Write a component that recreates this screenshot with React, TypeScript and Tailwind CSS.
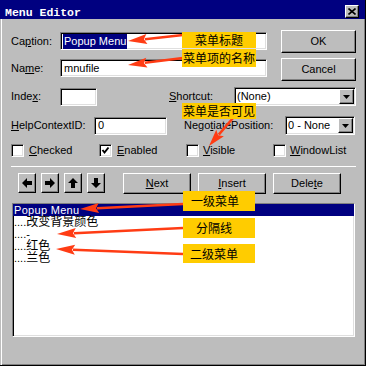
import React from "react";

const SUNKEN =
  "bg-white border border-t-[#808080] border-l-[#808080] border-r-white border-b-white shadow-[inset_1px_1px_0_#000,inset_-1px_-1px_0_#dfdfdf]";
const RAISED =
  "bg-[#bdbdbd] border border-t-white border-l-white border-r-black border-b-black shadow-[inset_-1px_-1px_0_#808080]";

function U({ children }: { children: React.ReactNode }) {
  return <span className="underline underline-offset-[1px] decoration-1">{children}</span>;
}

function DownTri() {
  return (
    <svg width="7" height="4" viewBox="0 0 7 4">
      <polygon points="0,0 7,0 3.5,4" fill="#000" />
    </svg>
  );
}

function Combo({ w, text }: { w: string; text: string }) {
  return (
    <div className={`${SUNKEN} ${w} h-[19px] flex items-center`}>
      <span className="flex-1 pl-[2px] leading-none">{text}</span>
      <div className={`${RAISED} w-[15px] h-[15px] mr-px flex items-center justify-center`}>
        <DownTri />
      </div>
    </div>
  );
}

function Check({ checked }: { checked?: boolean }) {
  return (
    <div className={`${SUNKEN} w-[13px] h-[13px] flex items-center justify-center`}>
      {checked && (
        <svg width="9" height="9" viewBox="0 0 9 9">
          <path d="M1.5 4 L3.5 6.5 L7.5 1.5" stroke="#000" strokeWidth="2" fill="none" />
        </svg>
      )}
    </div>
  );
}

function ArrowIcon({ dir }: { dir: "l" | "r" | "u" | "d" }) {
  const rot = { l: 0, r: 180, u: 90, d: 270 }[dir];
  return (
    <svg width="10" height="10" viewBox="0 0 10 10" style={{ transform: `rotate(${rot}deg)` }}>
      <polygon points="0,5 5,0 5,3 10,3 10,7 5,7 5,10" fill="#000" />
    </svg>
  );
}

function Arrow({ x1, y1, x2, y2, head = 19, hw = 5 }: { x1: number; y1: number; x2: number; y2: number; head?: number; hw?: number }) {
  const dx = x2 - x1;
  const dy = y2 - y1;
  const len = Math.hypot(dx, dy);
  const ux = dx / len;
  const uy = dy / len;
  const bx = x2 - ux * head;
  const by = y2 - uy * head;
  const px = -uy;
  const py = ux;
  const pts = `${x2},${y2} ${bx + px * hw},${by + py * hw} ${bx + ux * 3},${by + uy * 3} ${bx - px * hw},${by - py * hw}`;
  return (
    <g>
      <line x1={x1} y1={y1} x2={bx + ux * 2} y2={by + uy * 2} stroke="#ff3c14" strokeWidth="2.5" />
      <polygon points={pts} fill="#ff3c14" />
    </g>
  );
}

function Note({ cls, text }: { cls: string; text: string }) {
  return (
    <div
      className={`absolute bg-[#ffcc00] flex items-center text-[12px] text-black font-['Noto_Sans_CJK_SC',sans-serif] leading-none ${cls}`}
    >
      {text}
    </div>
  );
}

export default function App() {
  return (
    <div className="relative w-[366px] h-[366px] bg-[#bdbdbd] border-r border-b border-black overflow-hidden flex flex-col text-[11px] text-black font-['Liberation_Sans','Noto_Sans_CJK_SC',sans-serif] leading-none">
      {/* Title bar */}
      <div className="h-[19px] bg-[#000080] flex items-start justify-between shrink-0">
        <span className="ml-[5px] mt-[7px] text-white font-bold text-[11.5px] font-['Liberation_Mono',monospace]">
          Menu Editor
        </span>
        <div className={`${RAISED} mt-[5px] mr-[6px] w-[14px] h-[13px] flex items-center justify-center`}>
          <svg width="8" height="7" viewBox="0 0 8 7">
            <path d="M0.5 0.5 L7.5 6.5 M7.5 0.5 L0.5 6.5" stroke="#000" strokeWidth="1.6" />
          </svg>
        </div>
      </div>

      {/* Body */}
      <div className="flex-1 flex flex-col pl-[11px] shadow-[inset_1px_0_0_#bdbdbd,inset_2px_0_0_#fff,inset_-1px_-1px_0_#808080]">
        {/* top section */}
        <div className="flex pt-[11px]">
          <div className="flex flex-col pt-[2px]">
            <div className="flex items-center h-[18px]">
              <span className="w-[49px]">
                Ca<U>p</U>tion:
              </span>
              <div className={`${SUNKEN} w-[207px] h-[18px] flex items-center pl-[2px]`}>
                <span className="bg-[#000080] text-white px-px py-[2px]">Popup Menu</span>
              </div>
            </div>
            <div className="flex items-center h-[18px] mt-[9px]">
              <span className="w-[49px]">
                Na<U>m</U>e:
              </span>
              <div className={`${SUNKEN} w-[207px] h-[18px] flex items-center pl-[3px]`}>mnufile</div>
            </div>
          </div>
          <div className="flex flex-col ml-[14px]">
            <div className={`${RAISED} w-[75px] h-[23px] flex items-center justify-center`}>OK</div>
            <div className={`${RAISED} w-[75px] h-[23px] mt-[5px] flex items-center justify-center`}>Cancel</div>
          </div>
        </div>

        {/* Index / Shortcut */}
        <div className="flex items-center h-[19px] mt-[6px]">
          <span className="w-[49px]">
            Inde<U>x</U>:
          </span>
          <div className={`${SUNKEN} w-[37px] h-[18px]`} />
          <span className="ml-[72px] w-[65px]">
            <U>S</U>hortcut:
          </span>
          <Combo w="w-[122px]" text="(None)" />
        </div>

        {/* HelpContextID / NegotiatePosition */}
        <div className="flex items-center h-[19px] mt-[10px]">
          <span className="w-[83px]">
            <U>H</U>elpContextID:
          </span>
          <div className={`${SUNKEN} w-[73px] h-[18px] flex items-center pl-[3px]`}>0</div>
          <span className="ml-[17px] w-[101px]">
            Nego<U>t</U>iatePosition:
          </span>
          <Combo w="w-[70px]" text="0 - None" />
        </div>

        {/* Checkboxes */}
        <div className="flex items-center h-[13px] mt-[9px]">
          <Check />
          <span className="ml-[5px] w-[70px]">
            <U>C</U>hecked
          </span>
          <Check checked />
          <span className="ml-[5px] w-[69px]">
            <U>E</U>nabled
          </span>
          <Check />
          <span className="ml-[4px] w-[70px]">
            <U>V</U>isible
          </span>
          <Check />
          <span className="ml-[4px]">
            <U>W</U>indowList
          </span>
        </div>

        {/* separator */}
        <div className="mt-[9px] w-[345px] h-px bg-white" />

        {/* button row */}
        <div className="flex items-start mt-[6px]">
          <div className="flex gap-[5px] ml-[7px]">
            {(["l", "r", "u", "d"] as const).map((d) => (
              <div key={d} className={`${RAISED} w-[18px] h-[20px] flex items-center justify-center`}>
                <ArrowIcon dir={d} />
              </div>
            ))}
          </div>
          <div className={`${RAISED} ml-[18px] w-[68px] h-[21px] flex items-center justify-center`}>
            <U>N</U>ext
          </div>
          <div className={`${RAISED} ml-[7px] w-[68px] h-[21px] flex items-center justify-center`}>
            <U>I</U>nsert
          </div>
          <div className={`${RAISED} ml-[7px] w-[68px] h-[21px] flex items-center justify-center`}>
            Dele<U>t</U>e
          </div>
        </div>

        {/* list */}
        <div className={`${SUNKEN} ml-px mt-[9px] w-[343px] h-[134px] flex flex-col pt-0`}>
          <div className="h-[12px] bg-[#000080] text-white flex items-center pl-px tracking-[0.3px]">Popup Menu</div>
          <div className="h-[12px] flex items-center pl-px">
            ....<span className="text-[12px]">改变背景颜色</span>
          </div>
          <div className="h-[12px] flex items-center pl-px">....-</div>
          <div className="h-[12px] flex items-center pl-px">
            ....<span className="text-[12px]">红色</span>
          </div>
          <div className="h-[12px] flex items-center pl-px">
            ....<span className="text-[12px]">兰色</span>
          </div>
        </div>
      </div>

      {/* annotation arrows */}
      <svg className="absolute left-0 top-0 pointer-events-none" width="366" height="366" viewBox="0 0 366 366">
        <Arrow x1={183} y1={35} x2={128} y2={41} />
        <Arrow x1={183} y1={58} x2={128} y2={65} />
        <Arrow x1={233} y1={118} x2={209} y2={146} head={17} />
        <Arrow x1={183} y1={204} x2={80} y2={209} />
        <Arrow x1={183} y1={228} x2={57} y2={234} />
        <Arrow x1={183} y1={254} x2={56} y2={249} />
      </svg>

      <Note cls="left-[182px] top-[32px] w-[74px] h-[16px] justify-center" text="菜单标题" />
      <Note cls="left-[182px] top-[49px] w-[74px] h-[18px] justify-center" text="菜单项的名称" />
      <Note cls="left-[182px] top-[103px] w-[74px] h-[16px] justify-center" text="菜单是否可见" />
      <Note cls="left-[183px] top-[191px] w-[72px] h-[20px] pl-[8px]" text="一级菜单" />
      <Note cls="left-[183px] top-[218px] w-[72px] h-[20px] pl-[13px]" text="分隔线" />
      <Note cls="left-[183px] top-[244px] w-[72px] h-[19px] pl-[7px]" text="二级菜单" />
    </div>
  );
}
